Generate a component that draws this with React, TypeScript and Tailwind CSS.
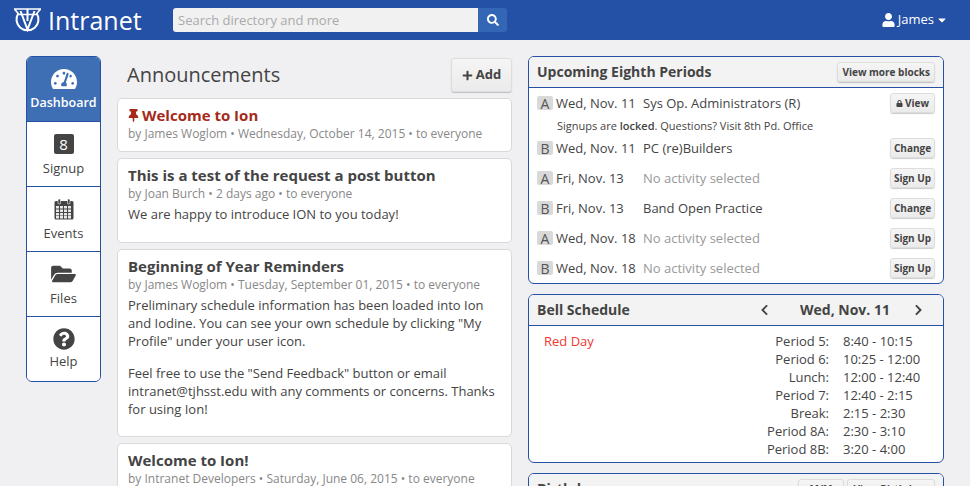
import { FaTachometerAlt, FaThumbtack, FaFolderOpen, FaQuestionCircle, FaUser, FaLock, FaPlus, FaSearch, FaChevronLeft, FaChevronRight, FaCaretDown } from "react-icons/fa";
import type { ReactNode } from "react";

function Logo() {
  return (
    <svg width="27" height="24" viewBox="0 0 27 24" fill="none" stroke="white" strokeWidth="2">
      <path d="M0.5 1 H26.5 L22 6.5 H5 Z" strokeWidth="1.6" fill="none" />
      <path d="M4.2 5.5 A11 11 0 1 0 22.8 5.5" />
      <path d="M6.5 3 L13.5 21.5 L20.5 3" />
      <path d="M13.5 1 V13" />
    </svg>
  );
}

function CalendarIcon() {
  return (
    <svg width="20" height="21" viewBox="0 0 20 21" fill="none">
      <rect x="0.5" y="2" width="19" height="18.5" rx="1.5" fill="#444" />
      <rect x="4" y="0" width="2.5" height="5" rx="1" fill="#444" stroke="white" strokeWidth="0.6" />
      <rect x="13.5" y="0" width="2.5" height="5" rx="1" fill="#444" stroke="white" strokeWidth="0.6" />
      <g fill="#e8e8e8">
        {[7, 10.5, 14, 17].map((y) =>
          [2, 6, 10, 14].map((x) => <rect key={`${x}-${y}`} x={x} y={y} width="3" height="2.5" />)
        )}
      </g>
    </svg>
  );
}

function NavItem({ icon, label, active, h, labelClass = "" }: { icon: ReactNode; label: string; active?: boolean; h: string; labelClass?: string }) {
  return (
    <div className={`${h} flex flex-col items-center justify-start pt-[10px] border-b border-[#2450a5] last:border-b-0 ${active ? "bg-[#3e6fb5] text-white" : "bg-white text-[#444]"}`}>
      <div className="h-[24px] flex items-center justify-center">{icon}</div>
      <div className={`leading-[18px] ${labelClass} ${active ? "font-semibold text-[12.5px]" : "text-[13px]"}`}>{label}</div>
    </div>
  );
}

function Post({ title, meta, h, pinned, children }: { title: string; meta: string; h: string; pinned?: boolean; children?: ReactNode }) {
  return (
    <div className={`${h} bg-white border border-[#d9d9d9] rounded-[5px] px-[10px] pt-[5px] shrink-0`}>
      <div className={`text-[15px] font-bold leading-[22px] flex items-center ${pinned ? "text-[#a52a1a]" : "text-[#444]"}`}>
        {pinned && <FaThumbtack className="w-[11px] h-[13px] mr-[3px]" />}
        {title}
      </div>
      <div className="text-[12px] leading-[16px] text-[#888]">{meta}</div>
      {children}
    </div>
  );
}

function SmallButton({ children, className = "" }: { children: ReactNode; className?: string }) {
  return (
    <div className={`h-[20px] px-[4px] flex items-center justify-center whitespace-nowrap border border-[#ddd] rounded-[3px] bg-linear-to-b from-[#f5f5f5] to-[#ebebeb] shadow-[0_1px_1px_rgba(0,0,0,0.2)] text-[10px] font-bold text-[#444] ${className}`}>
      {children}
    </div>
  );
}

function BlockRow({ block, date, activity, none, button }: { block: string; date: string; activity: string; none?: boolean; button: ReactNode }) {
  return (
    <div className="h-[30px] flex items-center pl-[8px] pr-[8px] text-[13px] text-[#444]">
      <div className="w-[16px] h-[14px] -mt-[2px] rounded-[2px] bg-[#d9d9d9] text-[#555] flex items-center justify-center text-[14px] mr-[3px]">{block}</div>
      <div className="w-[87px]">{date}</div>
      <div className={`flex-1 ${none ? "text-[#999]" : ""}`}>{activity}</div>
      <div className="-mt-[2px]">{button}</div>
    </div>
  );
}

const schedule = [
  ["Period 5:", "8:40 - 10:15"],
  ["Period 6:", "10:25 - 12:00"],
  ["Lunch:", "12:00 - 12:40"],
  ["Period 7:", "12:40 - 2:15"],
  ["Break:", "2:15 - 2:30"],
  ["Period 8A:", "2:30 - 3:10"],
  ["Period 8B:", "3:20 - 4:00"],
];

export default function App() {
  return (
    <div className="w-[970px] h-[486px] overflow-hidden bg-[#f0f0f2] text-[#444] font-['Open_Sans',sans-serif]">
      <header className="h-[40px] bg-[#2450a5] flex items-center text-white">
        <div className="ml-[14px] w-[27px] flex"><Logo /></div>
        <div className="ml-[7px] text-[25px] leading-[40px] w-[125px]">Intranet</div>
        <div className="flex h-[24px] w-[334px]">
          <div className="flex-1 bg-[#f1f1f1] rounded-l-[3px] text-[#aaa] text-[13px] leading-[24px] pl-[5px]">Search directory and more</div>
          <div className="w-[29px] bg-[#3367b5] rounded-r-[3px] flex items-center justify-center"><FaSearch className="w-[12px] h-[12px]" /></div>
        </div>
        <div className="ml-auto mr-[22px] flex items-center text-[13px]">
          <FaUser className="w-[13px] h-[14px] mr-[3px]" />
          James
          <FaCaretDown className="w-[12px] h-[12px] ml-[2px]" />
        </div>
      </header>
      <div className="flex items-start pt-[16px] pl-[26px]">
        <nav className="w-[75px] rounded-[6px] border border-[#2450a5] overflow-hidden shrink-0">
          <NavItem h="h-[65px]" active label="Dashboard" labelClass="mt-[3px]" icon={<FaTachometerAlt className="w-[26px] h-[24px]" />} />
          <NavItem h="h-[65px]" label="Signup" labelClass="mt-[3px]" icon={<div className="w-[20px] h-[20px] rounded-[2px] bg-[#444] text-white text-[15px] flex items-center justify-center">8</div>} />
          <NavItem h="h-[65px]" label="Events" labelClass="mt-[3px]" icon={<CalendarIcon />} />
          <NavItem h="h-[65px]" label="Files" labelClass="mt-[3px]" icon={<FaFolderOpen className="w-[25px] h-[22px]" />} />
          <NavItem h="h-[64px]" label="Help" labelClass="mt-[1px]" icon={<FaQuestionCircle className="w-[22px] h-[22px]" />} />
        </nav>
        <main className="w-[395px] ml-[16px] shrink-0">
          <div className="h-[42px] flex items-start justify-between">
            <h1 className="ml-[10px] mt-[3px] text-[20px] leading-[32px]">Announcements</h1>
            <div className="mt-[2px] w-[61px] h-[34px] border border-[#ddd] rounded-[3px] bg-linear-to-b from-[#f5f5f5] to-[#ebebeb] shadow-[0_1px_1px_rgba(0,0,0,0.2)] flex items-center justify-center font-bold text-[13px]">
              <FaPlus className="w-[11px] h-[11px] mr-[3px]" />Add
            </div>
          </div>
          <div className="flex flex-col gap-[6px]">
            <Post pinned h="h-[54px]" title="Welcome to Ion" meta="by James Woglom • Wednesday, October 14, 2015 • to everyone" />
            <Post h="h-[85px]" title="This is a test of the request a post button" meta="by Joan Burch • 2 days ago • to everyone">
              <p className="text-[13px] leading-[18px] mt-[3px]">We are happy to introduce ION to you today!</p>
            </Post>
            <Post h="h-[188px]" title="Beginning of Year Reminders" meta="by James Woglom • Tuesday, September 01, 2015 • to everyone">
              <p className="text-[13px] leading-[18px] mt-[3px]">Preliminary schedule information has been loaded into Ion and Iodine. You can see your own schedule by clicking "My Profile" under your user icon.</p>
              <p className="text-[13px] leading-[18px] mt-[14px]">Feel free to use the "Send Feedback" button or email intranet@tjhsst.edu with any comments or concerns. Thanks for using Ion!</p>
            </Post>
            <Post h="h-[60px]" title="Welcome to Ion!" meta="by Intranet Developers • Saturday, June 06, 2015 • to everyone" />
          </div>
        </main>
        <aside className="w-[416px] ml-[16px] shrink-0 flex flex-col gap-[10px]">
          <section className="h-[228px] border border-[#2450a5] rounded-[6px] overflow-hidden bg-white">
            <div className="h-[31px] bg-[#f3f3f3] border-b border-[#2450a5] flex items-center justify-between pl-[8px] pr-[8px]">
              <div className="text-[14px] font-bold -mt-[2px]">Upcoming Eighth Periods</div>
              <SmallButton>View more blocks</SmallButton>
            </div>
            <div className="pt-[1px]">
              <BlockRow block="A" date="Wed, Nov. 11" activity="Sys Op. Administrators (R)" button={<SmallButton className="w-[45px]"><FaLock className="w-[7px] h-[7px] mr-[2px]" />View</SmallButton>} />
              <div className="h-[15px] -mt-[1px] mb-[1px] pl-[28px] text-[11px] leading-[15px]">Signups are <b className="font-semibold">locked</b>. Questions? Visit 8th Pd. Office</div>
              <BlockRow block="B" date="Wed, Nov. 11" activity="PC (re)Builders" button={<SmallButton className="w-[45px]">Change</SmallButton>} />
              <BlockRow block="A" date="Fri, Nov. 13" activity="No activity selected" none button={<SmallButton className="w-[45px]">Sign Up</SmallButton>} />
              <BlockRow block="B" date="Fri, Nov. 13" activity="Band Open Practice" button={<SmallButton className="w-[45px]">Change</SmallButton>} />
              <BlockRow block="A" date="Wed, Nov. 18" activity="No activity selected" none button={<SmallButton className="w-[45px]">Sign Up</SmallButton>} />
              <BlockRow block="B" date="Wed, Nov. 18" activity="No activity selected" none button={<SmallButton className="w-[45px]">Sign Up</SmallButton>} />
            </div>
          </section>
          <section className="h-[169px] border border-[#2450a5] rounded-[6px] overflow-hidden bg-white">
            <div className="h-[31px] bg-[#f3f3f3] border-b border-[#2450a5] flex items-center pl-[8px] text-[14px] font-bold">
              <div className="w-[223px] -mt-[2px]">Bell Schedule</div>
              <FaChevronLeft className="w-[9px] h-[12px]" />
              <div className="w-[145px] pl-[7px] text-center -mt-[2px]">Wed, Nov. 11</div>
              <FaChevronRight className="w-[9px] h-[12px]" />
            </div>
            <div className="flex pl-[15px] pt-[6px] text-[13px]">
              <div className="w-[195px] text-[#f0382f] leading-[18px]">Red Day</div>
              <div className="leading-[18px]">
                {schedule.map(([k, v]) => (
                  <div key={k} className="flex">
                    <div className="w-[90px] text-right">{k}</div>
                    <div className="ml-[14px]">{v}</div>
                  </div>
                ))}
              </div>
            </div>
          </section>
          <section className="h-[60px] border border-[#2450a5] rounded-[6px] overflow-hidden bg-white">
            <div className="h-[31px] bg-[#f3f3f3] border-b border-[#2450a5] flex items-center justify-between pl-[8px] pr-[8px]">
              <div className="text-[14px] font-bold -mt-[2px]">Birthdays</div>
              <div className="flex gap-[3px]">
                <SmallButton className="w-[46px]">M/M</SmallButton>
                <SmallButton className="w-[88px]">View Birthdays</SmallButton>
              </div>
            </div>
          </section>
        </aside>
      </div>
    </div>
  );
}
